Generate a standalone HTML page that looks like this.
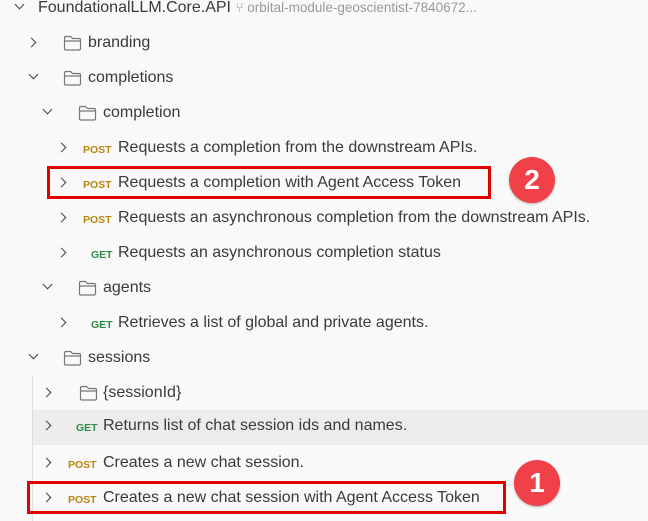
<!DOCTYPE html>
<html><head><style>
body{margin:0;width:648px;height:521px;background:#f9f9f9;font-family:"Liberation Sans",sans-serif;position:relative;overflow:hidden;color:#3a3a3a}
.r{position:absolute;left:0;width:648px;height:35px;}
.t{position:absolute;top:7px;font-size:16px;white-space:nowrap}
.c{position:absolute;top:12px;width:6px;height:6px;border-right:1.5px solid #444;border-bottom:1.5px solid #444}
.cr{transform:rotate(-45deg)}
.cd{transform:rotate(45deg);top:9px}
.m{position:absolute;top:12px;font-size:10.5px;font-weight:bold}
.post{color:#b8860b}.get{color:#2e8b45}
.f{position:absolute;top:8px;width:19px;height:16px}
.box{position:absolute;border:3px solid #e00000}
.badge{position:absolute;width:46px;height:46px;border-radius:50%;background:#f04048;color:#fff;font-weight:bold;font-size:28px;text-align:center;line-height:46px;box-shadow:0 1px 2px rgba(0,0,0,.3)}
</style></head><body>
<svg width="0" height="0" style="position:absolute"><defs><symbol id="fd" viewBox="0 0 19 16"><path d="M1.5 3Q1.5 1.5 3 1.5h4.5l2 2H16q1.5 0 1.5 1.5v8.5q0 1.5-1.5 1.5H3q-1.5 0-1.5-1.5z M1.5 6h16" fill="none" stroke="#777" stroke-width="1.2"/></symbol></defs></svg>
<div class="r" style="top:-8px"><div class="c cd" style="left:16px"></div><div class="t" style="left:38px">FoundationalLLM.Core.API <span style="color:#999;font-size:13.5px">⑂ orbital-module-geoscientist-7840672...</span></div></div>
<div class="r" style="top:27px"><div class="c cr" style="left:28px"></div><svg class="f" style="left:63px"><use href="#fd"/></svg><div class="t" style="left:88px">branding</div></div>
<div class="r" style="top:62px"><div class="c cd" style="left:30px"></div><svg class="f" style="left:63px"><use href="#fd"/></svg><div class="t" style="left:88px">completions</div></div>
<div class="r" style="top:97px"><div class="c cd" style="left:44px"></div><svg class="f" style="left:78px"><use href="#fd"/></svg><div class="t" style="left:103px">completion</div></div>
<div class="r" style="top:132px"><div class="c cr" style="left:58px"></div><div class="m post" style="left:83px">POST</div><div class="t" style="left:118px">Requests a completion from the downstream APIs.</div></div>
<div class="r" style="top:167px"><div class="c cr" style="left:58px"></div><div class="m post" style="left:83px">POST</div><div class="t" style="left:118px">Requests a completion with Agent Access Token</div></div>
<div class="r" style="top:202px"><div class="c cr" style="left:58px"></div><div class="m post" style="left:83px">POST</div><div class="t" style="left:118px">Requests an asynchronous completion from the downstream APIs.</div></div>
<div class="r" style="top:237px"><div class="c cr" style="left:58px"></div><div class="m get" style="left:91px">GET</div><div class="t" style="left:118px">Requests an asynchronous completion status</div></div>
<div class="r" style="top:272px"><div class="c cd" style="left:44px"></div><svg class="f" style="left:78px"><use href="#fd"/></svg><div class="t" style="left:103px">agents</div></div>
<div class="r" style="top:307px"><div class="c cr" style="left:58px"></div><div class="m get" style="left:91px">GET</div><div class="t" style="left:118px">Retrieves a list of global and private agents.</div></div>
<div class="r" style="top:342px"><div class="c cd" style="left:30px"></div><svg class="f" style="left:63px"><use href="#fd"/></svg><div class="t" style="left:88px">sessions</div></div>
<div style="position:absolute;left:32px;top:375px;width:1px;height:146px;background:#ddd"></div>
<div class="r" style="top:377px"><div class="c cr" style="left:43px"></div><svg class="f" style="left:79px"><use href="#fd"/></svg><div class="t" style="left:103px">{sessionId}</div></div>
<div class="r" style="top:410px;left:33px;width:615px;background:#ececec"><div class="c cr" style="left:10px"></div><div class="m get" style="left:43px">GET</div><div class="t" style="left:70px">Returns list of chat session ids and names.</div></div>
<div class="r" style="top:447px"><div class="c cr" style="left:43px"></div><div class="m post" style="left:68px">POST</div><div class="t" style="left:103px">Creates a new chat session.</div></div>
<div class="r" style="top:482px"><div class="c cr" style="left:43px"></div><div class="m post" style="left:68px">POST</div><div class="t" style="left:103px">Creates a new chat session with Agent Access Token</div></div>
<div class="box" style="left:47px;top:166px;width:438px;height:27px"></div>
<div class="box" style="left:27px;top:481px;width:473px;height:27px"></div>
<div class="badge" style="left:509px;top:157px">2</div>
<div class="badge" style="left:514px;top:460px">1</div>
</body></html>
